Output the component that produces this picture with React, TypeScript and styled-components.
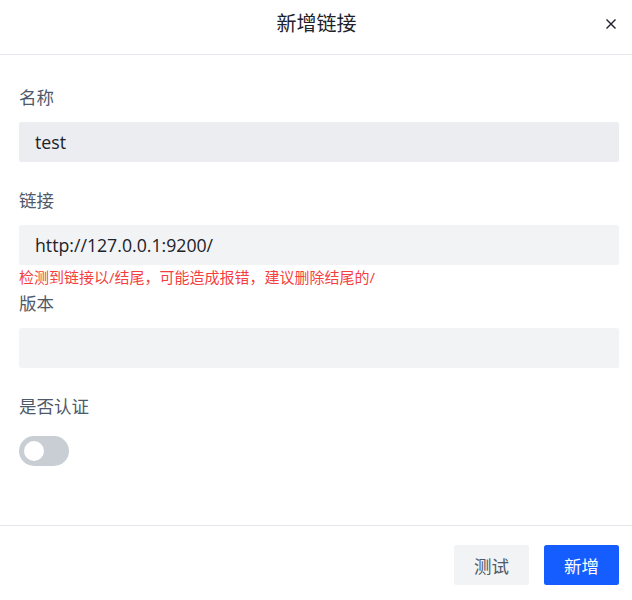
import React from "react";
import styled, { createGlobalStyle } from "styled-components";

const GlobalStyle = createGlobalStyle`
  html, body {
    margin: 0;
    padding: 0;
    background: #ffffff;
  }
  body {
    font-family: "Open Sans", "Noto Sans CJK SC", sans-serif;
    -webkit-font-smoothing: antialiased;
  }
  * { box-sizing: border-box; }
`;

const Modal = styled.div`
  width: 632px;
  min-height: 600px;
  background: #ffffff;
  display: flex;
  flex-direction: column;
`;

const Header = styled.header`
  height: 55px;
  padding: 0 15px 6px 16px;
  border-bottom: 1px solid #e5e6eb;
  display: grid;
  grid-template-columns: 1fr auto 1fr;
  align-items: center;
`;

const Title = styled.h1`
  grid-column: 2;
  margin: 0;
  font-size: 20px;
  line-height: 28px;
  font-weight: 400;
  color: #1d2129;
`;

const CloseButton = styled.button`
  grid-column: 3;
  justify-self: end;
  width: 12px;
  height: 12px;
  padding: 0;
  border: none;
  background: transparent;
  display: flex;
  align-items: center;
  justify-content: center;
  cursor: pointer;
  color: #1d2129;
`;

const Body = styled.div`
  padding: 30px 13px 28px 19px;
  display: flex;
  flex-direction: column;
`;

const Item = styled.div<{ $error?: boolean }>`
  display: flex;
  flex-direction: column;
  margin-bottom: ${(p) => (p.$error ? "0" : "26px")};
`;

const Label = styled.label`
  font-size: 17.5px;
  line-height: 25px;
  color: #4e5969;
  margin-bottom: 12px;
`;

const Input = styled.input<{ $hover?: boolean }>`
  height: 40px;
  width: 100%;
  border: none;
  outline: none;
  border-radius: 2.5px;
  padding: 0 16px;
  font-family: inherit;
  font-size: 17.7px;
  color: #1d2129;
  background: ${(p) => (p.$hover ? "#ecedf1" : "#f2f3f5")};
`;

const ErrorText = styled.div`
  height: 26px;
  font-size: 15px;
  line-height: 24px;
  color: #f53f3f;
`;

const SwitchRow = styled.div`
  height: 40px;
  display: flex;
  align-items: center;
`;

const Switch = styled.button<{ $on?: boolean }>`
  width: 50px;
  height: 30px;
  border-radius: 15px;
  border: none;
  padding: 0 5px;
  display: flex;
  align-items: center;
  justify-content: ${(p) => (p.$on ? "flex-end" : "flex-start")};
  background: ${(p) => (p.$on ? "#165dff" : "#c9cdd4")};
  cursor: pointer;
`;

const Knob = styled.span`
  width: 20px;
  height: 20px;
  border-radius: 50%;
  background: #ffffff;
`;

const Footer = styled.footer`
  border-top: 1px solid #e5e6eb;
  padding: 19px 13px 14px 19px;
  display: flex;
  justify-content: flex-end;
  gap: 15px;
`;

const Button = styled.button<{ $primary?: boolean }>`
  height: 40px;
  padding: 0 20px;
  border: none;
  border-radius: 2.5px;
  font-family: inherit;
  font-size: 17.5px;
  cursor: pointer;
  background: ${(p) => (p.$primary ? "#165dff" : "#f2f3f5")};
  color: ${(p) => (p.$primary ? "#ffffff" : "#4e5969")};
`;

export default function App() {
  return (
    <>
      <GlobalStyle />
      <Modal>
        <Header>
          <Title>新增链接</Title>
          <CloseButton aria-label="close">
            <svg width="10" height="10" viewBox="0 0 10 10" fill="none">
              <path d="M1 1L9 9M9 1L1 9" stroke="currentColor" strokeWidth="1.4" strokeLinecap="square" />
            </svg>
          </CloseButton>
        </Header>
        <Body>
          <Item>
            <Label>名称</Label>
            <Input $hover readOnly defaultValue="test" />
          </Item>
          <Item $error>
            <Label>链接</Label>
            <Input readOnly defaultValue="http://127.0.0.1:9200/" />
            <ErrorText>检测到链接以/结尾，可能造成报错，建议删除结尾的/</ErrorText>
          </Item>
          <Item>
            <Label>版本</Label>
            <Input readOnly defaultValue="" />
          </Item>
          <Item>
            <Label>是否认证</Label>
            <SwitchRow>
              <Switch aria-label="auth">
                <Knob />
              </Switch>
            </SwitchRow>
          </Item>
        </Body>
        <Footer>
          <Button>测试</Button>
          <Button $primary>新增</Button>
        </Footer>
      </Modal>
    </>
  );
}
